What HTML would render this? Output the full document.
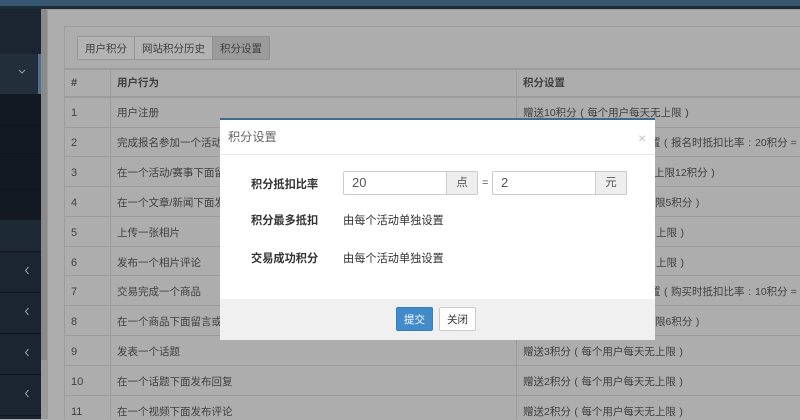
<!DOCTYPE html>
<html lang="zh"><head><meta charset="utf-8"><style>
html,body{margin:0;padding:0}
body{width:800px;height:419px;overflow:hidden;position:relative;background:#adadad;font-family:"Liberation Sans","Noto Sans CJK SC",sans-serif;font-size:10.5px;color:#3f3f3f}
div{position:absolute;box-sizing:border-box;white-space:nowrap}
.hl{left:64px;width:736px;height:1px;background:#9c9c9c}
.t{line-height:16px;height:16px}
.n{left:71px;font-size:11px}.a{left:117px}.c{left:523px}
.m{font-size:11.2px;color:#333}
i{font-style:normal;display:inline-block;width:10.5px;text-align:center}
b{font-weight:bold}
.sep{left:0;width:41px;height:1px;background:#10151b}
svg{position:absolute}
</style></head><body>
<div style="left:0;top:0;width:800px;height:6px;background:#37566f"></div>
<div style="left:0;top:6px;width:800px;height:3px;background:#1e2c38"></div>
<div style="left:0;top:9px;width:41px;height:410px;background:#1a2531"></div>
<div style="left:0;top:54px;width:41px;height:40px;background:#222e3a"></div>
<div style="left:38px;top:54px;width:3px;height:40px;background:#4e6f8e"></div>
<div style="left:0;top:94px;width:41px;height:126px;background:#131922"></div>
<div class="sep" style="top:125px"></div><div class="sep" style="top:156px"></div><div class="sep" style="top:189px"></div>
<div style="left:0;top:220px;width:41px;height:31px;background:#1d2935"></div>
<div class="sep" style="top:251px"></div><div class="sep" style="top:292px"></div><div class="sep" style="top:333px"></div><div class="sep" style="top:374px"></div><div class="sep" style="top:415px"></div>
<svg style="left:18px;top:69px" width="8" height="6"><path d="M1 1l3 3 3-3" fill="none" stroke="#97a0a8" stroke-width="1"/></svg>
<svg style="left:24px;top:266px" width="6" height="9"><path d="M4.500 1L1.500 4.500 4.500 8" fill="none" stroke="#97a0a8"/></svg>
<svg style="left:24px;top:307px" width="6" height="9"><path d="M4.500 1L1.500 4.500 4.500 8" fill="none" stroke="#97a0a8"/></svg>
<svg style="left:24px;top:348px" width="6" height="9"><path d="M4.500 1L1.500 4.500 4.500 8" fill="none" stroke="#97a0a8"/></svg>
<svg style="left:24px;top:389px" width="6" height="9"><path d="M4.500 1L1.500 4.500 4.500 8" fill="none" stroke="#97a0a8"/></svg>
<div style="left:41px;top:9px;width:7px;height:410px;background:#9a9a9a"></div>
<div style="left:41px;top:9px;width:6px;height:351px;background:#8a8a8a"></div>
<div style="left:48px;top:9px;width:752px;height:1px;background:#9c9c9c"></div>
<div style="left:64px;top:26px;width:736px;height:393px;border:1px solid #9c9c9c;border-right:0;border-bottom:0"></div>
<div style="left:77px;top:36px;width:193px;height:24px;border:1px solid #989898;border-radius:2px;background:#b3b3b3"></div>
<div style="left:134px;top:36px;width:1px;height:24px;background:#989898"></div>
<div style="left:212px;top:36px;width:58px;height:24px;background:#9b9b9b;border:1px solid #8f8f8f;border-radius:0 2px 2px 0"></div>
<div class="t" style="left:85px;top:41px">用户积分</div>
<div class="t" style="left:142px;top:41px">网站积分历史</div>
<div class="t" style="left:220px;top:41px">积分设置</div>
<div class="hl" style="top:68px;height:2px"></div>
<div class="hl" style="top:96px;height:2px"></div>
<div class="hl" style="top:127px"></div><div class="hl" style="top:156px"></div><div class="hl" style="top:186px"></div><div class="hl" style="top:216px"></div><div class="hl" style="top:246px"></div><div class="hl" style="top:275px"></div><div class="hl" style="top:305px"></div><div class="hl" style="top:335px"></div><div class="hl" style="top:365px"></div><div class="hl" style="top:395px"></div>
<div style="left:110px;top:68px;width:1px;height:351px;background:#9c9c9c"></div>
<div style="left:516px;top:68px;width:1px;height:351px;background:#9c9c9c"></div>
<div class="t n" style="top:75px"><b>#</b></div><div class="t a" style="top:75px"><b>用户行为</b></div><div class="t c" style="top:75px"><b>积分设置</b></div>
<div class="t n" style="top:105px">1</div><div class="t a" style="top:105px">用户注册</div><div class="t c" style="top:105px">赠送10积分<i>(</i>每个用户每天无上限<i>)</i></div>
<div class="t n" style="top:135px">2</div><div class="t a" style="top:135px">完成报名参加一个活动</div><div class="t" style="left:650px;top:135px">置<i>(</i>报名时抵扣比率<i>:</i>20积分 =</div>
<div class="t n" style="top:165px">3</div><div class="t a" style="top:165px">在一个活动/赛事下面留言</div><div class="t" style="left:654px;top:165px">上限12积分<i>)</i></div>
<div class="t n" style="top:195px">4</div><div class="t a" style="top:195px">在一个文章/新闻下面发表</div><div class="t" style="left:655px;top:195px">限5积分<i>)</i></div>
<div class="t n" style="top:225px">5</div><div class="t a" style="top:225px">上传一张相片</div><div class="t" style="left:656px;top:225px">上限<i>)</i></div>
<div class="t n" style="top:255px">6</div><div class="t a" style="top:255px">发布一个相片评论</div><div class="t" style="left:656px;top:255px">上限<i>)</i></div>
<div class="t n" style="top:284px">7</div><div class="t a" style="top:284px">交易完成一个商品</div><div class="t" style="left:650px;top:284px">置<i>(</i>购买时抵扣比率<i>:</i>10积分 =</div>
<div class="t n" style="top:314px">8</div><div class="t a" style="top:314px">在一个商品下面留言或</div><div class="t" style="left:655px;top:314px">限6积分<i>)</i></div>
<div class="t n" style="top:344px">9</div><div class="t a" style="top:344px">发表一个话题</div><div class="t c" style="top:344px">赠送3积分<i>(</i>每个用户每天无上限<i>)</i></div>
<div class="t n" style="top:374px">10</div><div class="t a" style="top:374px">在一个话题下面发布回复</div><div class="t c" style="top:374px">赠送2积分<i>(</i>每个用户每天无上限<i>)</i></div>
<div class="t n" style="top:404px">11</div><div class="t a" style="top:404px">在一个视频下面发布评论</div><div class="t c" style="top:404px">赠送2积分<i>(</i>每个用户每天无上限<i>)</i></div>

<div style="left:220px;top:118px;width:435px;height:222px;background:#fff;border-top:2px solid #3f6c92"></div>
<div style="left:220px;top:154px;width:435px;height:1px;background:#e8e8e8"></div>
<div class="t" style="left:228px;top:129px;font-size:12.2px;color:#666">积分设置</div>
<div style="left:638px;top:129px;font-size:14px;line-height:18px;color:#c4c4c4">×</div>
<div class="t m" style="left:251px;top:177px"><b>积分抵扣比率</b></div>
<div style="left:343px;top:171px;width:135px;height:24px;border:1px solid #ccc;border-radius:2px"></div>
<div style="left:446px;top:171px;width:32px;height:24px;border:1px solid #ccc;background:#eee;border-radius:0 2px 2px 0;text-align:center;line-height:23px;font-size:11.5px;color:#555">点</div>
<div style="left:352px;top:174px;font-size:13px;line-height:18px;color:#555">20</div>
<div style="left:482px;top:175px;font-size:11px;line-height:16px;color:#555">=</div>
<div style="left:492px;top:171px;width:135px;height:24px;border:1px solid #ccc;border-radius:2px"></div>
<div style="left:595px;top:171px;width:32px;height:24px;border:1px solid #ccc;background:#eee;border-radius:0 2px 2px 0;text-align:center;line-height:23px;font-size:11.5px;color:#555">元</div>
<div style="left:501px;top:174px;font-size:13px;line-height:18px;color:#555">2</div>
<div class="t m" style="left:251px;top:213px"><b>积分最多抵扣</b></div>
<div class="t m" style="left:343px;top:213px">由每个活动单独设置</div>
<div class="t m" style="left:251px;top:251px"><b>交易成功积分</b></div>
<div class="t m" style="left:343px;top:251px">由每个活动单独设置</div>
<div style="left:220px;top:299px;width:435px;height:41px;background:#f0f0f0"></div>
<div style="left:396px;top:307px;width:37px;height:24px;background:#428bca;border:1px solid #357ebd;border-radius:2px;color:#fff;text-align:center;line-height:24px">提交</div>
<div style="left:439px;top:307px;width:37px;height:24px;background:#fff;border:1px solid #ccc;border-radius:2px;color:#333;text-align:center;line-height:24px">关闭</div>
</body></html>
